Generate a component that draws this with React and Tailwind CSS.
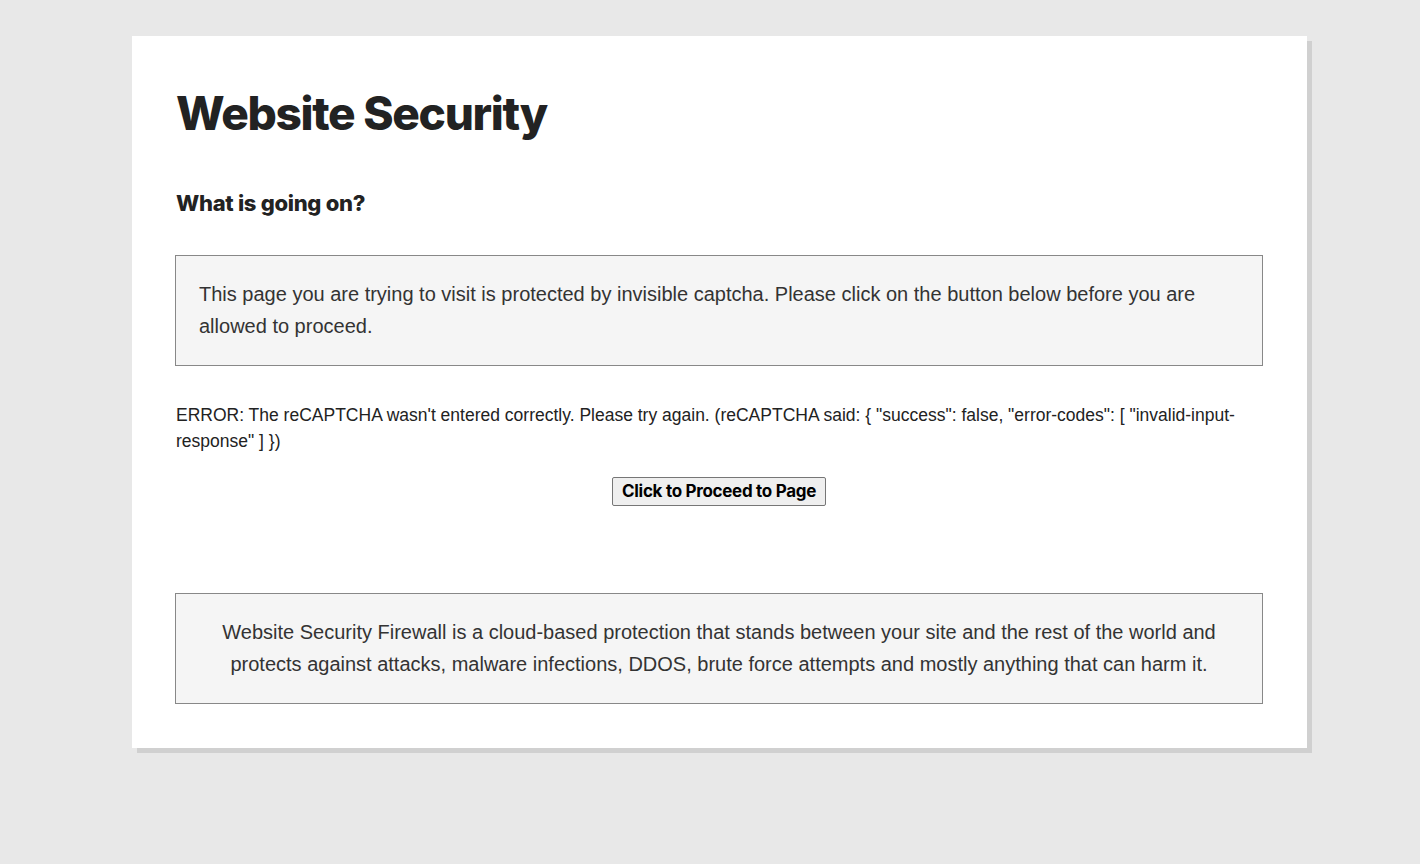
import React from 'react';

const heading = { fontFamily: 'Inter, "Noto Sans", sans-serif' };

export default function App() {
  return (
    <div className="min-h-screen bg-[#e8e8e8] pt-9 pb-16" style={{ fontFamily: '"Liberation Sans", Arial, sans-serif' }}>
      {/* Main card with flat offset shadow */}
      <div className="ml-[132px] w-[1175px] bg-white pl-[43px] pr-[44px] pt-[48px] pb-[44px] shadow-[5px_5px_0_#d0d0d0] text-[#222]">
        <h1 className="pl-px text-[46px] font-extrabold leading-[58px] tracking-[-1.3px]" style={heading}>
          Website Security
        </h1>
        <h2 className="mt-[46px] pl-px text-[22px] font-extrabold leading-[30px] tracking-[-0.3px]" style={heading}>
          What is going on?
        </h2>

        <div className="mt-[37px] border border-[#888] bg-[#f5f5f5] px-[23px] pt-[22px] pb-[23px] text-[20px] leading-[32px] text-[#333]">
          This page you are trying to visit is protected by invisible captcha. Please click on the button below before you are allowed to proceed.
        </div>

        <p className="mt-[36px] pl-px text-[17.5px] leading-[26px] text-[#222]">
          ERROR: The reCAPTCHA wasn't entered correctly. Please try again. (reCAPTCHA said: {'{'} "success": false, "error-codes": [ "invalid-input-response" ] {'}'})
        </p>

        <div className="mt-[23px] flex justify-center">
          <button
            className="h-[29px] rounded-[2px] border border-[#767676] bg-[#efefef] px-[9px] text-[17px] font-bold tracking-[-0.3px] text-black"
            style={heading}
          >
            Click to Proceed to Page
          </button>
        </div>

        <div className="mt-[87px] border border-[#888] bg-[#f5f5f5] px-[23px] pt-[22px] pb-[23px] text-center text-[20px] leading-[32px] text-[#333]">
          Website Security Firewall is a cloud-based protection that stands between your site and the rest of the world and protects against attacks, malware infections, DDOS, brute force attempts and mostly anything that can harm it.
        </div>
      </div>
    </div>
  );
}
